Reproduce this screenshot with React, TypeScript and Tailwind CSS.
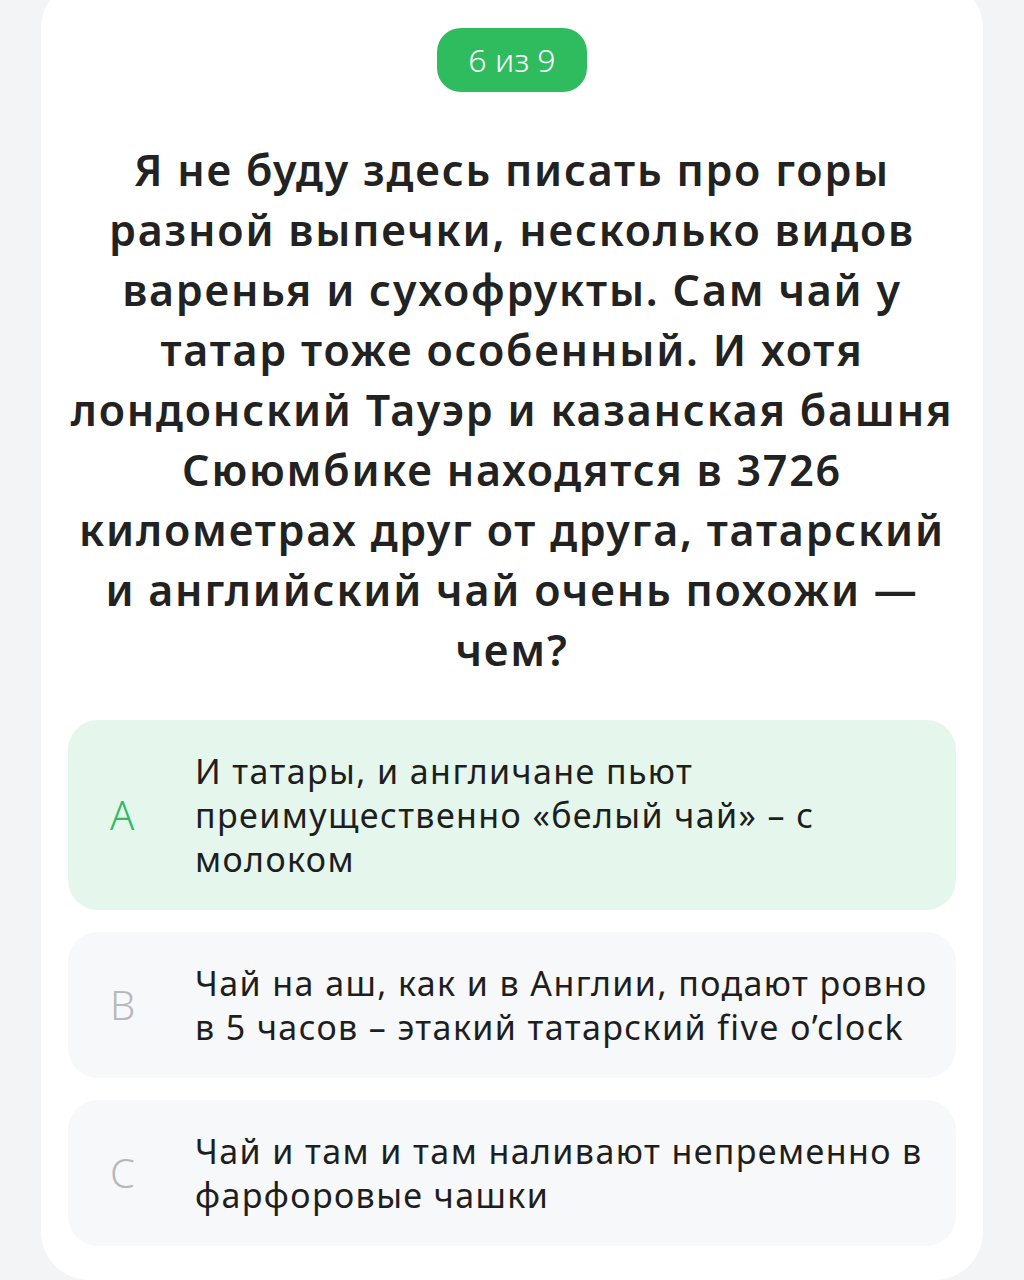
import { ReactNode } from 'react'

interface AnswerProps {
  letter: string
  selected?: boolean
  children: ReactNode
}

function Answer({ letter, selected, children }: AnswerProps) {
  return (
    <div
      className={
        selected
          ? 'flex items-center rounded-[30px] bg-[#e5f7ec] pl-[42px] pr-[20px] pt-[29px] pb-[29px]'
          : 'flex items-center rounded-[30px] bg-[#f7f8fa] pl-[42px] pr-[20px] pt-[29px] pb-[29px]'
      }
    >
      <div
        className={
          selected
            ? 'w-[85px] shrink-0 text-[40px] font-light leading-none text-[#33b866]'
            : 'w-[85px] shrink-0 text-[40px] font-light leading-none text-[#b8b8bb]'
        }
      >
        {letter}
      </div>
      <div className="whitespace-nowrap text-[34px] leading-[44px] tracking-[1.4px] text-[#1e1e1e]">
        {children}
      </div>
    </div>
  )
}

export default function App() {
  return (
    <div className="min-h-screen overflow-hidden bg-[#f3f4f6] font-['Noto_Sans',sans-serif]">
      <div className="mx-[41px] -mt-[20px] min-h-[1300px] rounded-[48px] bg-white px-[27px] pt-[48px]">
        {/* счётчик вопроса */}
        <div className="flex justify-center">
          <div className="flex h-[64px] w-[150px] items-center justify-center rounded-[24px] bg-[#2fbc5f] text-[32px] font-light text-white">
            6 из 9
          </div>
        </div>

        <h1 className="mt-[48px] whitespace-nowrap text-center text-[43px] font-semibold leading-[60px] tracking-[1.8px] text-[#222222]">
          Я не буду здесь писать про горы
          <br />
          разной выпечки, несколько видов
          <br />
          варенья и сухофрукты. Сам чай у
          <br />
          татар тоже особенный. И хотя
          <br />
          лондонский Тауэр и казанская башня
          <br />
          Сююмбике находятся в 3726
          <br />
          километрах друг от друга, татарский
          <br />
          и английский чай очень похожи —
          <br />
          чем?
        </h1>

        <div className="mt-[40px] flex flex-col gap-[22px]">
          <Answer letter="A" selected>
            И татары, и англичане пьют
            <br />
            преимущественно «белый чай» – с
            <br />
            молоком
          </Answer>
          <Answer letter="B">
            Чай на аш, как и в Англии, подают ровно
            <br />в 5 часов – этакий татарский five o’clock
          </Answer>
          <Answer letter="C">
            Чай и там и там наливают непременно в
            <br />
            фарфоровые чашки
          </Answer>
        </div>
      </div>
    </div>
  )
}
